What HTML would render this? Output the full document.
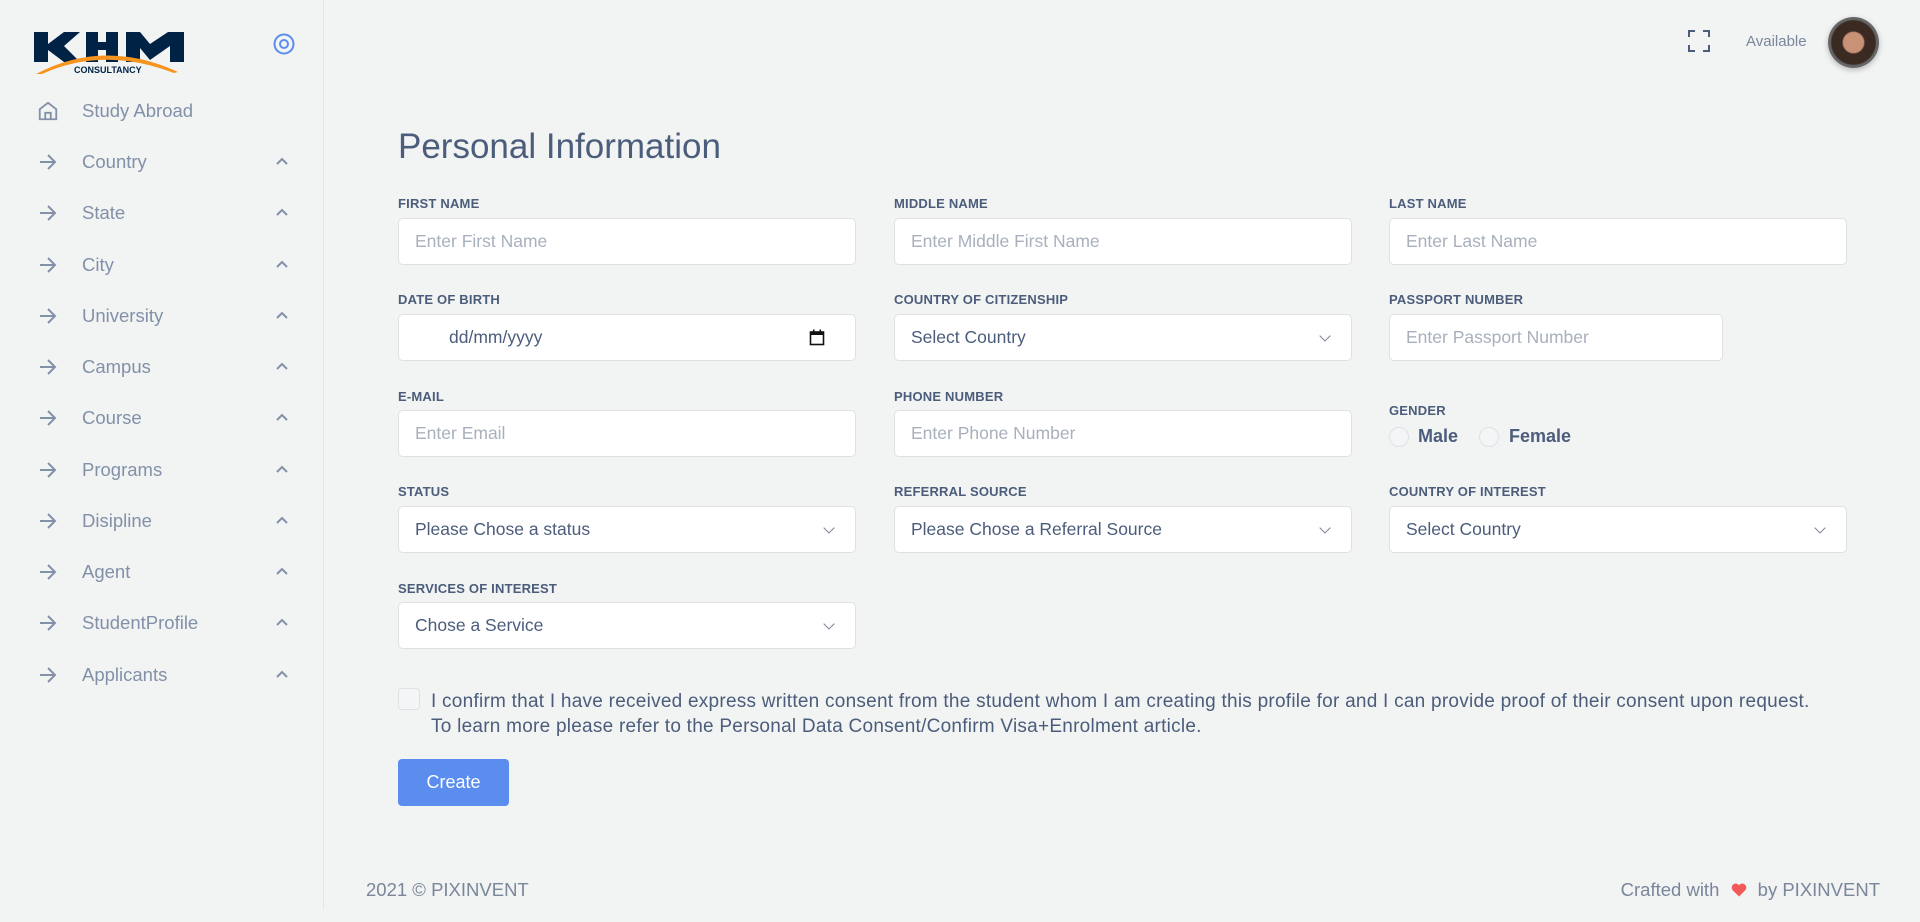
<!DOCTYPE html>
<html><head><meta charset="utf-8"><style>
*{box-sizing:border-box;margin:0;padding:0}
body{width:1920px;height:922px;background:#f2f3f3;font-family:"Liberation Sans",sans-serif;position:relative;overflow:hidden;color:#455a7a}
.a{position:absolute}
.side{left:0;top:0;width:324px;height:910px;border-right:1px solid #e3e5e8}
.mi{position:absolute;left:46px;font-size:18.5px;color:#8291a8;width:250px;height:30px;line-height:30px}
.mi span{position:absolute;left:36px}
.mi .ar{position:absolute;left:-7px;top:7px}
.mi .ch{position:absolute;left:230px;top:10px}
.lbl{position:absolute;font-size:13px;font-weight:bold;color:#4b5d7b;letter-spacing:.2px}
.in{position:absolute;width:458px;height:47px;background:#fff;border:1px solid #dde1e6;border-radius:5px;font-size:17.5px;line-height:45px;padding-left:16px;color:#a8b0bd}
.sel{color:#4b5d7b}
.sel:after{content:"";position:absolute;right:22px;top:17px;width:7px;height:7px;border-right:1.5px solid #7a8596;border-bottom:1.5px solid #7a8596;transform:rotate(45deg)}
.rad{position:absolute;width:20px;height:20px;border:1px solid #dde1e6;border-radius:50%;background:#f4f5f6}
</style></head><body>
<div class="a side">
<svg class="a" style="left:34px;top:30px" width="152" height="46" viewBox="0 0 152 46">
<rect x="0" y="2" width="14" height="30" fill="#002244"/>
<polygon points="14,14 30,2 46,2 30,16 46,32 30,32 14,20" fill="#002244"/>
<rect x="52" y="2" width="12" height="30" fill="#002244"/><rect x="72" y="2" width="12" height="30" fill="#002244"/><rect x="52" y="12" width="32" height="8" fill="#002244"/>
<polygon points="92,32 92,2 106,2 116,14 134,2 150,2 150,32 136,32 136,16 116,30 106,18 106,32" fill="#002244"/>
<path d="M2 44 Q70 8 144 42 L140 43 Q70 16 8 44Z" fill="#f7941d"/>
<text x="40" y="43" font-size="9" font-weight="bold" fill="#002244" font-family="Liberation Sans">CONSULTANCY</text>
</svg>
<svg class="a" style="left:273px;top:33px" width="22" height="22" viewBox="0 0 22 22"><circle cx="11" cy="11" r="9.5" fill="none" stroke="#5b8def" stroke-width="2"/><circle cx="11" cy="11" r="4" fill="none" stroke="#5b8def" stroke-width="2"/></svg>
<div class="mi" style="top:96px"><svg class="a" style="left:-9px;top:4px" width="22" height="22" viewBox="0 0 24 24" fill="none" stroke="#8291a8" stroke-width="2"><path d="M3 10l9-7 9 7v11H3z"/><path d="M9 21v-7h6v7"/></svg><span>Study Abroad</span></div>
<div class="mi" style="top:147px"><svg class="ar" width="18" height="16" viewBox="0 0 18 16" fill="none" stroke="#8291a8" stroke-width="2"><path d="M1 8h15M9 1l7 7-7 7"/></svg><span>Country</span><svg class="ch" width="12" height="8" viewBox="0 0 12 8" fill="none" stroke="#8291a8" stroke-width="2"><path d="M1 7l5-5 5 5"/></svg></div>
<div class="mi" style="top:198px"><svg class="ar" width="18" height="16" viewBox="0 0 18 16" fill="none" stroke="#8291a8" stroke-width="2"><path d="M1 8h15M9 1l7 7-7 7"/></svg><span>State</span><svg class="ch" width="12" height="8" viewBox="0 0 12 8" fill="none" stroke="#8291a8" stroke-width="2"><path d="M1 7l5-5 5 5"/></svg></div>
<div class="mi" style="top:250px"><svg class="ar" width="18" height="16" viewBox="0 0 18 16" fill="none" stroke="#8291a8" stroke-width="2"><path d="M1 8h15M9 1l7 7-7 7"/></svg><span>City</span><svg class="ch" width="12" height="8" viewBox="0 0 12 8" fill="none" stroke="#8291a8" stroke-width="2"><path d="M1 7l5-5 5 5"/></svg></div>
<div class="mi" style="top:301px"><svg class="ar" width="18" height="16" viewBox="0 0 18 16" fill="none" stroke="#8291a8" stroke-width="2"><path d="M1 8h15M9 1l7 7-7 7"/></svg><span>University</span><svg class="ch" width="12" height="8" viewBox="0 0 12 8" fill="none" stroke="#8291a8" stroke-width="2"><path d="M1 7l5-5 5 5"/></svg></div>
<div class="mi" style="top:352px"><svg class="ar" width="18" height="16" viewBox="0 0 18 16" fill="none" stroke="#8291a8" stroke-width="2"><path d="M1 8h15M9 1l7 7-7 7"/></svg><span>Campus</span><svg class="ch" width="12" height="8" viewBox="0 0 12 8" fill="none" stroke="#8291a8" stroke-width="2"><path d="M1 7l5-5 5 5"/></svg></div>
<div class="mi" style="top:403px"><svg class="ar" width="18" height="16" viewBox="0 0 18 16" fill="none" stroke="#8291a8" stroke-width="2"><path d="M1 8h15M9 1l7 7-7 7"/></svg><span>Course</span><svg class="ch" width="12" height="8" viewBox="0 0 12 8" fill="none" stroke="#8291a8" stroke-width="2"><path d="M1 7l5-5 5 5"/></svg></div>
<div class="mi" style="top:455px"><svg class="ar" width="18" height="16" viewBox="0 0 18 16" fill="none" stroke="#8291a8" stroke-width="2"><path d="M1 8h15M9 1l7 7-7 7"/></svg><span>Programs</span><svg class="ch" width="12" height="8" viewBox="0 0 12 8" fill="none" stroke="#8291a8" stroke-width="2"><path d="M1 7l5-5 5 5"/></svg></div>
<div class="mi" style="top:506px"><svg class="ar" width="18" height="16" viewBox="0 0 18 16" fill="none" stroke="#8291a8" stroke-width="2"><path d="M1 8h15M9 1l7 7-7 7"/></svg><span>Disipline</span><svg class="ch" width="12" height="8" viewBox="0 0 12 8" fill="none" stroke="#8291a8" stroke-width="2"><path d="M1 7l5-5 5 5"/></svg></div>
<div class="mi" style="top:557px"><svg class="ar" width="18" height="16" viewBox="0 0 18 16" fill="none" stroke="#8291a8" stroke-width="2"><path d="M1 8h15M9 1l7 7-7 7"/></svg><span>Agent</span><svg class="ch" width="12" height="8" viewBox="0 0 12 8" fill="none" stroke="#8291a8" stroke-width="2"><path d="M1 7l5-5 5 5"/></svg></div>
<div class="mi" style="top:608px"><svg class="ar" width="18" height="16" viewBox="0 0 18 16" fill="none" stroke="#8291a8" stroke-width="2"><path d="M1 8h15M9 1l7 7-7 7"/></svg><span>StudentProfile</span><svg class="ch" width="12" height="8" viewBox="0 0 12 8" fill="none" stroke="#8291a8" stroke-width="2"><path d="M1 7l5-5 5 5"/></svg></div>
<div class="mi" style="top:660px"><svg class="ar" width="18" height="16" viewBox="0 0 18 16" fill="none" stroke="#8291a8" stroke-width="2"><path d="M1 8h15M9 1l7 7-7 7"/></svg><span>Applicants</span><svg class="ch" width="12" height="8" viewBox="0 0 12 8" fill="none" stroke="#8291a8" stroke-width="2"><path d="M1 7l5-5 5 5"/></svg></div>
</div>
<svg class="a" style="left:1688px;top:30px" width="22" height="22" viewBox="0 0 22 22" fill="none" stroke="#4b5d7b" stroke-width="2"><path d="M1 7V1h6M15 1h6v6M21 15v6h-6M7 21H1v-6"/></svg>
<div class="a" style="left:1746px;top:33px;font-size:15px;color:#7a869a">Available</div>
<div class="a" style="left:1828px;top:17px;width:51px;height:51px;border-radius:50%;background:radial-gradient(ellipse at 50% 50%,#c99277 0 28%,#3a2a22 32% 60%,#666 64%);box-shadow:0 2px 6px rgba(0,0,0,.25)"></div>

<div class="a" style="left:398px;top:127px;font-size:35px;color:#4b5d7b">Personal Information</div>

<div class="lbl" style="left:398px;top:196px">FIRST NAME</div>
<div class="lbl" style="left:894px;top:196px">MIDDLE NAME</div>
<div class="lbl" style="left:1389px;top:196px">LAST NAME</div>
<div class="in" style="left:398px;top:218px">Enter First Name</div>
<div class="in" style="left:894px;top:218px">Enter Middle First Name</div>
<div class="in" style="left:1389px;top:218px">Enter Last Name</div>

<div class="lbl" style="left:398px;top:292px">DATE OF BIRTH</div>
<div class="lbl" style="left:894px;top:292px">COUNTRY OF CITIZENSHIP</div>
<div class="lbl" style="left:1389px;top:292px">PASSPORT NUMBER</div>
<div class="in" style="left:398px;top:314px;color:#4b5d7b;padding-left:50px">dd/mm/yyyy<svg class="a" style="right:30px;top:14px" width="16" height="17" viewBox="0 0 16 17"><rect x="1.5" y="3" width="13" height="12.5" fill="none" stroke="#111" stroke-width="1.6"/><rect x="1.5" y="3" width="13" height="3" fill="#111"/><rect x="4" y="0.5" width="1.5" height="3" fill="#111"/><rect x="10.5" y="0.5" width="1.5" height="3" fill="#111"/></svg></div>
<div class="in sel" style="left:894px;top:314px">Select Country</div>
<div class="in" style="left:1389px;top:314px;width:334px">Enter Passport Number</div>

<div class="lbl" style="left:398px;top:389px">E-MAIL</div>
<div class="lbl" style="left:894px;top:389px">PHONE NUMBER</div>
<div class="lbl" style="left:1389px;top:403px">GENDER</div>
<div class="in" style="left:398px;top:410px">Enter Email</div>
<div class="in" style="left:894px;top:410px">Enter Phone Number</div>
<div class="rad" style="left:1389px;top:427px"></div>
<div class="a" style="left:1418px;top:426px;font-size:18px;font-weight:bold;color:#4b5d7b">Male</div>
<div class="rad" style="left:1479px;top:427px"></div>
<div class="a" style="left:1509px;top:426px;font-size:18px;font-weight:bold;color:#4b5d7b">Female</div>

<div class="lbl" style="left:398px;top:484px">STATUS</div>
<div class="lbl" style="left:894px;top:484px">REFERRAL SOURCE</div>
<div class="lbl" style="left:1389px;top:484px">COUNTRY OF INTEREST</div>
<div class="in sel" style="left:398px;top:506px">Please Chose a status</div>
<div class="in sel" style="left:894px;top:506px">Please Chose a Referral Source</div>
<div class="in sel" style="left:1389px;top:506px">Select Country</div>

<div class="lbl" style="left:398px;top:581px">SERVICES OF INTEREST</div>
<div class="in sel" style="left:398px;top:602px">Chose a Service</div>

<div class="a" style="left:398px;top:688px;width:22px;height:22px;border:1px solid #dde1e6;border-radius:4px;background:#f4f5f6"></div>
<div class="a" style="left:431px;top:689px;font-size:19px;letter-spacing:0.25px;line-height:25px;color:#4b5d7b;white-space:nowrap">I confirm that I have received express written consent from the student whom I am creating this profile for and I can provide proof of their consent upon request.<br>To learn more please refer to the Personal Data Consent/Confirm Visa+Enrolment article.</div>

<div class="a" style="left:398px;top:759px;width:111px;height:47px;background:#5b8def;border-radius:4px;color:#fff;font-size:18px;line-height:47px;text-align:center">Create</div>

<div class="a" style="left:366px;top:879px;font-size:18.5px;color:#7a869a">2021 © PIXINVENT</div>
<div class="a" style="right:40px;top:879px;font-size:18.5px;color:#7a869a;white-space:nowrap">Crafted with <svg width="16" height="14" viewBox="0 0 16 14" style="margin:0 6px;vertical-align:-1px"><path d="M8 13.5L1.5 7A3.8 3.8 0 0 1 8 2.2 3.8 3.8 0 0 1 14.5 7z" fill="#f25a5a"/></svg> by PIXINVENT</div>
</body></html>
